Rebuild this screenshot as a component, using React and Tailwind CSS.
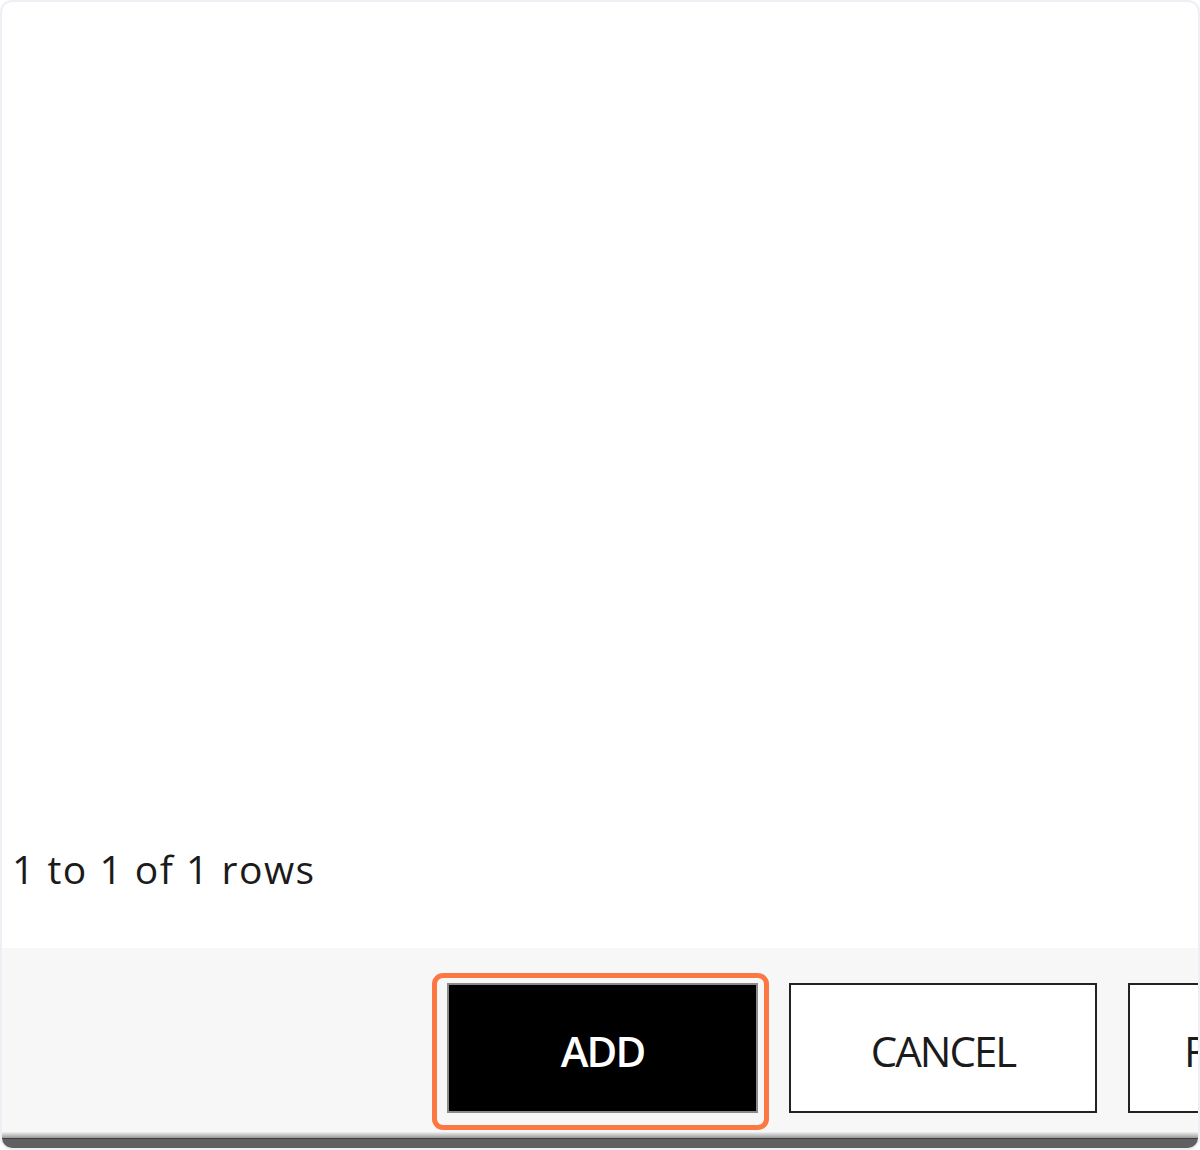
export default function App() {
    const font = { fontFamily: '"Open Sans", "Noto Sans", sans-serif' }

    return (
        <div className="w-[1200px] h-[1150px] bg-white" style={font}>
            <div className="flex h-full w-full flex-col overflow-hidden rounded-[12px] border-2 border-[#efeef5] bg-white">
                {/* grid body */}
                <div className="flex flex-1 flex-col justify-end px-[10px] pb-[60px]">
                    <p className="text-[39px] leading-none tracking-[1.5px] text-[#1b1b1b]">1 to 1 of 1 rows</p>
                </div>

                {/* footer actions */}
                <div className="flex h-[200px] flex-col bg-[#f7f7f7]">
                    <div className="flex flex-1 items-start gap-[31px] overflow-hidden pl-[445px] pt-[35px]">
                        <div className="relative shrink-0">
                            <button className="flex h-[130px] w-[311px] items-center justify-center border-2 border-[#8a8a8a] bg-black pt-[4px] text-[42px] font-semibold tracking-[-2px] text-white">
                                ADD
                            </button>
                            <span className="pointer-events-none absolute left-[-15px] top-[-10px] h-[157px] w-[337px] rounded-[11px] border-[5px] border-[#fd7743]" />
                        </div>
                        <button className="flex h-[130px] w-[308px] shrink-0 items-center justify-center border-2 border-[#222] bg-white pt-[4px] text-[42px] tracking-[-2px] text-[#1b1b1b]">
                            CANCEL
                        </button>
                        <button className="flex h-[130px] w-[308px] shrink-0 items-center justify-start border-2 border-[#222] bg-white pl-[54px] pt-[4px] text-[42px] tracking-[-2px] text-[#1b1b1b]">
                            REMOVE
                        </button>
                    </div>
                    <div className="h-[6px] bg-gradient-to-b from-[#f2f2f2] to-[#9a9a9a]" />
                    <div className="h-[10px] bg-[#606060] border-t border-[#3f3f3f]" />
                </div>
            </div>
        </div>
    )
}
